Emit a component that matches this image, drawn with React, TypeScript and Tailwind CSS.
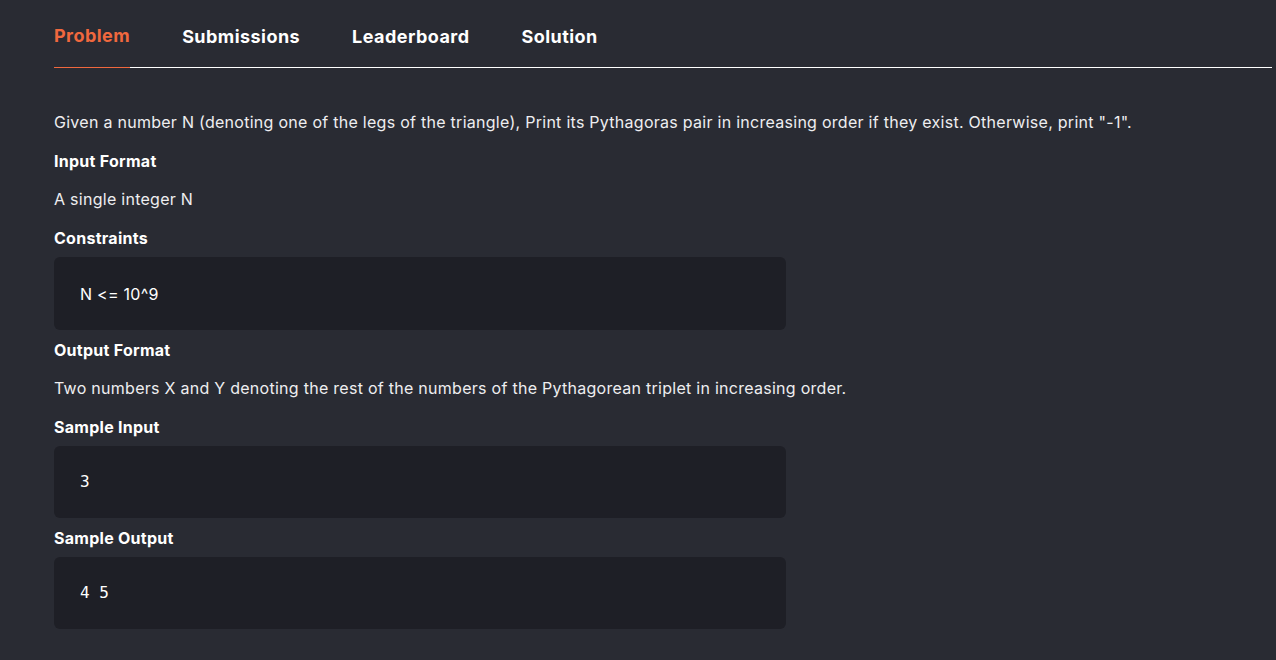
import React from "react";

const tabs = ["Problem", "Submissions", "Leaderboard", "Solution"];

function Heading({ children, tight }: { children: React.ReactNode; tight?: boolean }) {
  return (
    <h3
      className={
        "text-base leading-6 font-bold text-white " + (tight ? "mb-[7px]" : "mb-[14px]")
      }
    >
      {children}
    </h3>
  );
}

function Text({ children }: { children: React.ReactNode }) {
  return <p className="mb-[15px] text-base leading-6 text-[#eeeef0]">{children}</p>;
}

function CodeBox({
  children,
  mono,
  tall,
}: {
  children: React.ReactNode;
  mono?: boolean;
  tall?: boolean;
}) {
  return (
    <div
      className={
        "mb-2 flex w-[732px] items-center rounded-md bg-[#1e1f26] px-[26px] text-base text-white " +
        (tall ? "h-[73px] " : "h-[72px] ") +
        (mono ? "font-['DejaVu_Sans_Mono',monospace] tracking-normal" : "")
      }
    >
      {children}
    </div>
  );
}

export default function App() {
  return (
    <div className="min-h-screen bg-[#292b33] pl-[54px] pr-1 font-['Inter',sans-serif] tracking-[0.017em]">
      <nav className="flex gap-[52px] border-b border-white pt-6">
        {tabs.map((t, i) => (
          <button
            key={t}
            type="button"
            className={
              "-mb-px pb-[19px] text-lg leading-6 font-bold tracking-[0.025em] " +
              (i === 0 ? "border-b border-[#f0683e] text-[#f0683e]" : "text-white")
            }
          >
            {t}
          </button>
        ))}
      </nav>

      <div className="pt-[42px]">
        <Text>
          Given a number N (denoting one of the legs of the triangle), Print its Pythagoras pair in
          increasing order if they exist. Otherwise, print "-1".
        </Text>
        <Heading>Input Format</Heading>
        <Text>A single integer N</Text>
        <Heading tight>Constraints</Heading>
        <CodeBox tall>N &lt;= 10^9</CodeBox>
        <Heading>Output Format</Heading>
        <Text>
          Two numbers X and Y denoting the rest of the numbers of the Pythagorean triplet in
          increasing order.
        </Text>
        <Heading tight>Sample Input</Heading>
        <CodeBox mono>3</CodeBox>
        <Heading tight>Sample Output</Heading>
        <CodeBox mono>4 5</CodeBox>
      </div>
    </div>
  );
}
